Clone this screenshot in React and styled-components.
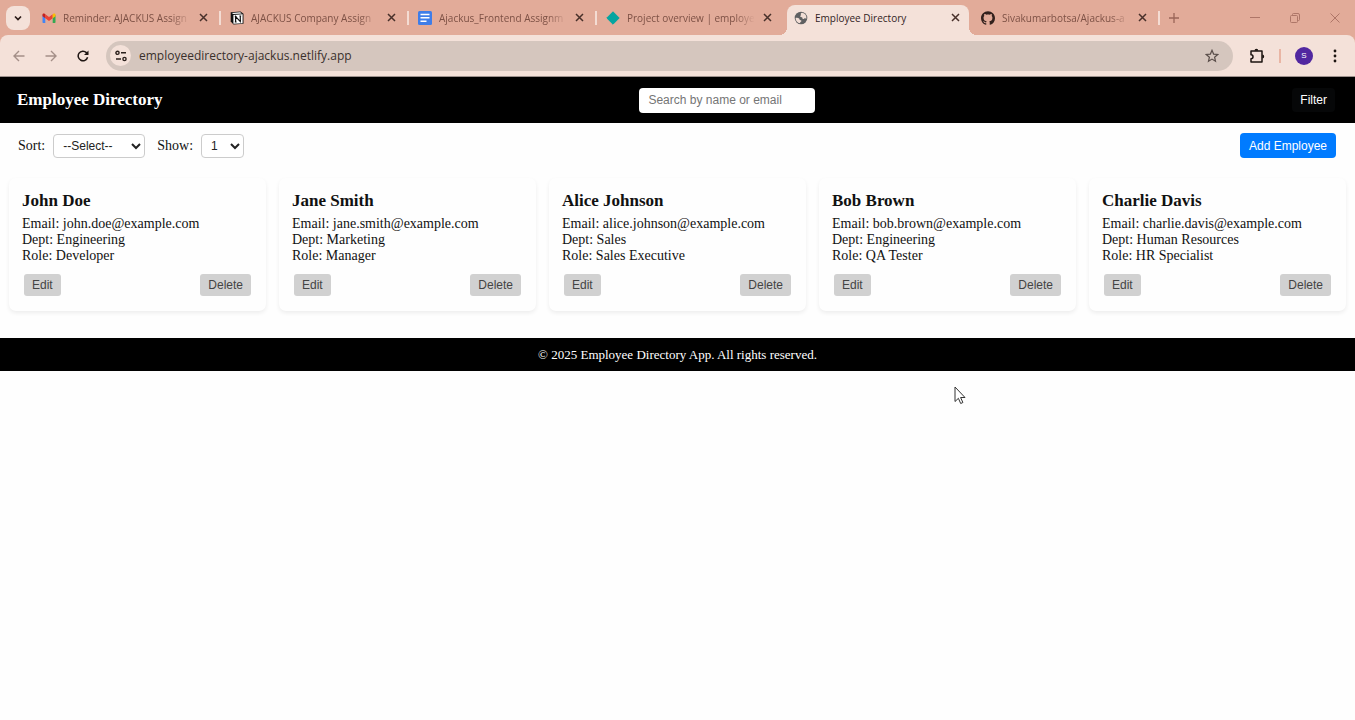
import React, { useState } from 'react';
import styled, { createGlobalStyle, css } from 'styled-components';
import { SiGithub } from 'react-icons/si';

const tabs = [
	{ title: 'Reminder: AJACKUS Assign', icon: GmailIcon },
	{ title: 'AJACKUS Company Assign', icon: NotionIcon },
	{ title: 'Ajackus_Frontend Assignm', icon: DocsIcon },
	{ title: 'Project overview | employe', icon: NetlifyIcon },
	{ title: 'Employee Directory', icon: GlobeIcon, active: true },
	{ title: 'Sivakumarbotsa/Ajackus-a', icon: GithubIcon },
];

const employees = [
	{ name: 'John Doe', email: 'john.doe@example.com', dept: 'Engineering', role: 'Developer' },
	{ name: 'Jane Smith', email: 'jane.smith@example.com', dept: 'Marketing', role: 'Manager' },
	{ name: 'Alice Johnson', email: 'alice.johnson@example.com', dept: 'Sales', role: 'Sales Executive' },
	{ name: 'Bob Brown', email: 'bob.brown@example.com', dept: 'Engineering', role: 'QA Tester' },
	{ name: 'Charlie Davis', email: 'charlie.davis@example.com', dept: 'Human Resources', role: 'HR Specialist' },
];

export default function App() {
	const [search, setSearch] = useState('');

	return (
		<>
			<GlobalStyle />
			<Browser />
			<Header>
				<Title>Employee Directory</Title>
				<SearchInput
					type="text"
					aria-label="Search by name or email"
					placeholder="Search by name or email"
					value={search}
					onChange={(e) => setSearch(e.target.value)}
				/>
				<FilterButton type="button">Filter</FilterButton>
			</Header>
			<Controls>
				<Field>
					<label htmlFor="sort">Sort:</label>
					<Select id="sort" $width={92} defaultValue="">
						<option value="">--Select--</option>
						<option value="name">Name</option>
						<option value="dept">Department</option>
					</Select>
				</Field>
				<Field>
					<label htmlFor="show">Show:</label>
					<Select id="show" $width={43} defaultValue="1">
						<option value="1">1</option>
						<option value="10">10</option>
						<option value="25">25</option>
					</Select>
				</Field>
				<AddButton type="button">Add Employee</AddButton>
			</Controls>
			<CardGrid>
				{employees.map((emp) => (
					<Card key={emp.email}>
						<Name>{emp.name}</Name>
						<Info>Email: {emp.email}</Info>
						<Info>Dept: {emp.dept}</Info>
						<Info>Role: {emp.role}</Info>
						<Actions>
							<CardButton type="button">Edit</CardButton>
							<CardButton type="button">Delete</CardButton>
						</Actions>
					</Card>
				))}
			</CardGrid>
			<Footer>© 2025 Employee Directory App. All rights reserved.</Footer>
			<Cursor width="12" height="19" viewBox="0 0 12 19" aria-hidden="true">
				<path d="M1 1v14.5l3.4-3.2 2.3 5.2 2.2-1-2.3-5H11z" fill="#fff" stroke="#333" strokeWidth="1" />
			</Cursor>
		</>
	);
}

function Browser() {
	return (
		<Chrome>
			<TabStrip>
				<TabSearch type="button" aria-label="Search tabs">
					<svg width="10" height="10" viewBox="0 0 10 10"><path d="M2 3.5l3 3 3-3" fill="none" stroke="#2b1b17" strokeWidth="1.7" /></svg>
				</TabSearch>
				{tabs.map(({ title, icon: Icon, active }) => (
					<Tab key={title} $active={active} data-active={active}>
						<Icon />
						<TabTitle $active={active}>{title}</TabTitle>
						<TabClose type="button" aria-label="Close tab">
							<svg width="9" height="9" viewBox="0 0 9 9"><path d="M1 1l7 7M8 1l-7 7" stroke="currentColor" strokeWidth="1.5" /></svg>
						</TabClose>
					</Tab>
				))}
				<NewTab type="button" aria-label="New tab">
					<svg width="10" height="10" viewBox="0 0 10 10"><path d="M5 0v10M0 5h10" stroke="#9a6558" strokeWidth="1.3" /></svg>
				</NewTab>
				<WindowButtons>
					<WindowButton type="button" aria-label="Minimize">
						<svg width="10" height="10" viewBox="0 0 10 10"><path d="M0 4.5h10" /></svg>
					</WindowButton>
					<WindowButton type="button" aria-label="Restore">
						<svg width="10" height="10" viewBox="0 0 10 10"><rect x=".5" y="2.5" width="7" height="7" rx="1" /><path d="M2.5 2.5V1.5a1 1 0 0 1 1-1h4.5a1.5 1.5 0 0 1 1.5 1.5v4.5a1 1 0 0 1-1 1h-1" /></svg>
					</WindowButton>
					<WindowButton type="button" aria-label="Close">
						<svg width="10" height="10" viewBox="0 0 10 10"><path d="M.5.5l9 9M9.5.5l-9 9" /></svg>
					</WindowButton>
				</WindowButtons>
			</TabStrip>
			<Toolbar>
				<NavButtons>
					<PlainButton type="button" aria-label="Back">
						<svg width="12" height="12" viewBox="0 0 12 12"><path d="M11.5 6H1M6 1L1 6l5 5" fill="none" stroke="#a48f88" strokeWidth="1.4" /></svg>
					</PlainButton>
					<PlainButton type="button" aria-label="Forward">
						<svg width="12" height="12" viewBox="0 0 12 12"><path d="M.5 6H11M6 1l5 5-5 5" fill="none" stroke="#a48f88" strokeWidth="1.4" /></svg>
					</PlainButton>
					<PlainButton type="button" aria-label="Reload">
						<svg width="12" height="12" viewBox="0 0 12 12"><path d="M10.6 7.3a4.8 4.8 0 1 1-1.2-4.7L10.8 4" fill="none" stroke="#1f1613" strokeWidth="1.5" /><path d="M11.5.5v4.5H7z" fill="#1f1613" /></svg>
					</PlainButton>
				</NavButtons>
				<AddressBar>
					<SiteInfo type="button" aria-label="View site information">
						<svg width="12" height="12" viewBox="0 0 12 12" fill="none" stroke="#2b201c" strokeWidth="1.4">
							<circle cx="2.5" cy="2.8" r="1.6" />
							<path d="M6 2.8h5M1 9h5" />
							<circle cx="9.5" cy="9" r="1.6" />
						</svg>
					</SiteInfo>
					<Url type="text" aria-label="Address" defaultValue="employeedirectory-ajackus.netlify.app" />
					<PlainButton type="button" aria-label="Bookmark this tab">
						<svg width="14" height="14" viewBox="0 0 14 14"><path d="M7 1.3l1.6 3.8 4.1.4-3.1 2.7.9 4L7 10.1l-3.5 2.1.9-4-3.1-2.7 4.1-.4z" fill="none" stroke="#5a4e4a" strokeWidth="1.2" /></svg>
					</PlainButton>
				</AddressBar>
				<PlainButton type="button" aria-label="Extensions">
					<svg width="16" height="16" viewBox="0 0 16 16">
						<path d="M2 3h11v11H2v-3.3a2 2 0 0 0 0-4z" fill="none" stroke="#1c1411" strokeWidth="1.5" strokeLinejoin="round" />
						<path d="M5.5 2.7a1.9 1.9 0 0 1 3.8 0zM13.3 6.6a1.9 1.9 0 0 1 0 3.8z" fill="#1c1411" />
					</svg>
				</PlainButton>
				<Divider />
				<Avatar type="button" aria-label="Profile">S</Avatar>
				<PlainButton type="button" aria-label="Menu">
					<svg width="4" height="14" viewBox="0 0 4 14" fill="#1c1411"><circle cx="2" cy="2" r="1.4" /><circle cx="2" cy="7" r="1.4" /><circle cx="2" cy="12" r="1.4" /></svg>
				</PlainButton>
			</Toolbar>
		</Chrome>
	);
}

function GmailIcon() {
	return (
		<svg width="14" height="14" viewBox="0 0 14 14">
			<path d="M.5 4v7.2c0 .5.3.8.8.8h2V6z" fill="#4285f4" />
			<path d="M10.7 6v6h2c.5 0 .8-.3.8-.8V4z" fill="#34a853" />
			<path d="M3.3 3.3v4L7 10l3.700-2.700v-4L7 6z" fill="#ea4335" />
			<path d="M.5 3.6v1.6l2.8 2.1v-4l-.6-.5C1.7 2.1.5 2.7.5 3.6z" fill="#c5221f" />
			<path d="M13.5 3.6v1.6l-2.8 2.1v-4l.6-.5c1-.7 2.2-.1 2.2.8z" fill="#fbbc04" />
		</svg>
	);
}

function NotionIcon() {
	return (
		<svg width="14" height="14" viewBox="0 0 14 14">
			<path d="M.7 1.2L10.5.5 13.5 2.7v10.1l-10 .8L.7 10.5z" fill="#111" />
			<path d="M3.4 3.9l9.2-.6v8.9l-9.2.6z" fill="#fff" />
			<path d="M1.7 1.9l8.5-.6 1.5 1.1-8.3.6z" fill="#fff" />
			<path d="M5.6 11V5.6l4.7 5V5M4.8 5.6h1.8M4.8 11h1.8M9.4 5h1.8" fill="none" stroke="#111" strokeWidth="1.2" />
		</svg>
	);
}

function DocsIcon() {
	return (
		<svg width="14" height="14" viewBox="0 0 14 14">
			<rect width="14" height="14" rx="1.5" fill="#3f7de8" />
			<path d="M2.5 3.5h9M2.5 6.8h9M2.5 10.2h6" stroke="#fff" strokeWidth="1.5" />
		</svg>
	);
}

function NetlifyIcon() {
	return (
		<svg width="14" height="14" viewBox="0 0 14 14">
			<path d="M7 .8L13.2 7 7 13.2.8 7z" fill="#05a5a0" stroke="#05a5a0" strokeLinejoin="round" />
		</svg>
	);
}

function GlobeIcon() {
	return (
		<svg width="14" height="14" viewBox="0 0 14 14">
			<circle cx="7" cy="7" r="6.3" fill="#5f6062" />
			<path d="M8.2 1.8c-1.4.2-1.7 1.2-1.3 1.9.3.7-.8.9-.7 1.7.1.7 1.4.4 1.9.9.5.6 0 1.3.8 1.7.8.3 1.3-.8 2.2-.7.7 0 1 .3 1.3.5A5.6 5.6 0 0 0 8.2 1.8zM1.6 7c1.2-.3 2.7-.2 3.5.5.7.6.2 1.3.9 1.6.6.3 1.4.2 1.4.9 0 .8-1.1.7-1.2 1.4l-.1.9A5.5 5.5 0 0 1 1.6 7z" fill="#f2ded6" />
		</svg>
	);
}

function GithubIcon() {
	return <SiGithub size={14} color="#33211d" />;
}

const GlobalStyle = createGlobalStyle`
	* {
		box-sizing: border-box;
	}
	body {
		margin: 0;
		background: #fefefe;
		color: #111;
		font-family: 'Liberation Serif', serif;
		font-size: 14px;
		line-height: 16px;
	}
	button, input, select {
		font-family: 'Liberation Sans', sans-serif;
		font-size: 12px;
	}
	svg {
		display: block;
		flex-shrink: 0;
	}
`;

const PlainButton = styled.button`
	display: flex;
	align-items: center;
	justify-content: center;
	flex-shrink: 0;
	padding: 0;
	border: 0;
	background: transparent;
`;

const Chrome = styled.div`
	background: #e2ab99;
	border-bottom: 1px solid #9d918d;
`;

const TabStrip = styled.div`
	display: flex;
	align-items: center;
	height: 35px;
	padding: 0 15px 0 6px;
`;

const TabSearch = styled(PlainButton)`
	width: 24px;
	height: 24px;
	margin-right: 3px;
	border-radius: 8px;
	background: #f4e1d9;
`;

const Tab = styled.div`
	display: flex;
	align-items: center;
	flex: 0 1 188px;
	min-width: 0;
	height: 14px;
	padding: 0 11px 0 9px;
	border-right: 2px solid #f4dcd3;
	color: #7d5145;

	&:has(+ [data-active]) {
		border-color: transparent;
	}

	${(props) => props.$active && css`
		position: relative;
		align-self: flex-end;
		flex-basis: 182px;
		height: 30px;
		margin: 0 3px 0 2px;
		padding: 0 9px 5px 7px;
		border: 0;
		border-radius: 8px 8px 0 0;
		background: #f4e1d9;
		color: #33231f;

		&::before, &::after {
			content: '';
			position: absolute;
			bottom: 0;
			width: 8px;
			height: 8px;
		}
		&::before {
			right: 100%;
			background: radial-gradient(circle at 0 0, #e2ab99 8px, #f4e1d9 8px);
		}
		&::after {
			left: 100%;
			background: radial-gradient(circle at 100% 0, #e2ab99 8px, #f4e1d9 8px);
		}
	`}
`;

const TabTitle = styled.span`
	flex: 1;
	min-width: 0;
	margin: 0 8px 0 7px;
	overflow: hidden;
	white-space: nowrap;
	font-family: 'Open Sans', sans-serif;
	font-size: 10px;
	mask-image: ${(props) => (props.$active ? 'none' : 'linear-gradient(to left, transparent, #000 20px)')};
`;

const TabClose = styled(PlainButton)`
	color: #48302a;
`;

const NewTab = styled(PlainButton)`
	margin-left: 9px;
`;

const WindowButtons = styled.div`
	display: flex;
	gap: 30px;
	margin-left: auto;
`;

const WindowButton = styled(PlainButton)`
	svg {
		fill: none;
		stroke: #ae7668;
	}
`;

const Toolbar = styled.div`
	display: flex;
	align-items: center;
	height: 41px;
	padding: 0 18px 0 13px;
	border-radius: 8px 8px 0 0;
	background: #f4e1d9;
`;

const NavButtons = styled.nav`
	display: flex;
	gap: 20px;
	margin-right: 17px;
`;

const AddressBar = styled.div`
	display: flex;
	align-items: center;
	flex: 1;
	height: 30px;
	margin-right: 16px;
	padding: 0 14px 0 4px;
	border-radius: 15px;
	background: #d5c6be;
`;

const SiteInfo = styled(PlainButton)`
	width: 21px;
	height: 21px;
	border-radius: 50%;
	background: #f4e1d9;
`;

const Url = styled.input`
	flex: 1;
	padding: 0 8px;
	border: 0;
	background: transparent;
	color: #3a302c;
	font-family: 'Open Sans', sans-serif;
	font-size: 12px;
`;

const Divider = styled.span`
	width: 2px;
	height: 14px;
	margin: 0 14px;
	background: #e9b5a4;
`;

const Avatar = styled(PlainButton)`
	width: 18px;
	height: 18px;
	margin-right: 20px;
	border-radius: 50%;
	background: #5127a0;
	color: #fff;
	font-size: 8px;
`;

const Header = styled.header`
	display: flex;
	align-items: center;
	justify-content: space-between;
	height: 46px;
	padding: 0 20px 0 17px;
	background: #000;
	color: #fff;
`;

const Title = styled.h1`
	margin: 0;
	font-size: 17px;
	line-height: 20px;
`;

const SearchInput = styled.input`
	width: 176px;
	height: 25px;
	padding: 0 9px;
	border: 0;
	border-radius: 4px;
	background: #fff;

	&::placeholder {
		color: #757575;
	}
`;

const FilterButton = styled.button`
	height: 24px;
	padding: 0 8px;
	border: 0;
	border-radius: 4px;
	background: #060708;
	color: #fff;
`;

const Controls = styled.div`
	display: flex;
	align-items: center;
	gap: 12px;
	padding: 10px 19px 10px 18px;
`;

const Field = styled.div`
	display: flex;
	align-items: center;
	gap: 8px;
`;

const Select = styled.select`
	width: ${(props) => props.$width}px;
	height: 24px;
	padding: 0 4px 0 5px;
	border: 1px solid #ccc;
	border-radius: 4px;
	background: #fff;
	color: #222;
`;

const AddButton = styled.button`
	height: 25px;
	margin-left: auto;
	padding: 0 9px;
	border: 0;
	border-radius: 4px;
	background: #007bff;
	color: #fff;
`;

const CardGrid = styled.main`
	display: grid;
	grid-template-columns: repeat(auto-fit, minmax(220px, 1fr));
	gap: 13px;
	padding: 10px 9px 27px;
`;

const Card = styled.article`
	padding: 13px;
	border-radius: 7px;
	background: #fefefe;
	box-shadow: 0 2px 4px rgba(0, 0, 0, 0.07);
`;

const Name = styled.h2`
	margin: 0 0 5px;
	font-size: 17px;
	line-height: 20px;
`;

const Info = styled.p`
	margin: 0;
`;

const Actions = styled.div`
	display: flex;
	justify-content: space-between;
	padding: 10px 2px 2px;
`;

const CardButton = styled.button`
	height: 22px;
	padding: 0 8px;
	border: 0;
	border-radius: 3px;
	background: #d1d1d1;
	color: #444;
`;

const Footer = styled.footer`
	padding: 8px;
	background: #000;
	color: #fff;
	text-align: center;
	font-size: 13px;
	line-height: 17px;
`;

const Cursor = styled.svg`
	position: absolute;
	top: 386px;
	left: 954px;
	pointer-events: none;
`;
